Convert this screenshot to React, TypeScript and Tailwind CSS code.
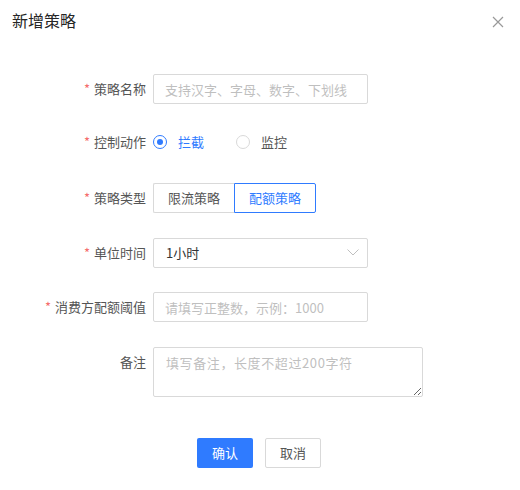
import React, { useState } from 'react';

const FONT = { fontFamily: '"Noto Sans CJK SC", "Noto Sans", sans-serif' };

const Label: React.FC<{ text: string; required?: boolean }> = ({ text, required }) => (
  <div className="w-[153px] shrink-0 pr-[7px] h-[30px] flex items-center justify-end text-[13px] text-[#555]">
    {required && <span className="text-[#f56c6c] mr-[4px] text-[13px]">*</span>}
    {text}
  </div>
);

const Radio: React.FC<{ checked: boolean; label: string; onClick: () => void }> = ({ checked, label, onClick }) => (
  <button type="button" onClick={onClick} className="flex items-center h-[30px] cursor-pointer">
    <span
      className={`w-[14px] h-[14px] rounded-full border flex items-center justify-center ${
        checked ? 'border-[#2f7bff]' : 'border-[#d9d9d9]'
      }`}
    >
      {checked && <span className="w-[6px] h-[6px] rounded-full bg-[#2f7bff]" />}
    </span>
    <span className={`ml-[11px] text-[13px] ${checked ? 'text-[#2f7bff]' : 'text-[#555]'}`}>{label}</span>
  </button>
);

export default function App() {
  const [action, setAction] = useState('block');
  const [type, setType] = useState('quota');

  return (
    <div className="w-[520px] h-[490px] bg-white relative" style={FONT}>
      <div className="flex items-center justify-between pl-[12px] pr-[16px] pt-[5px] h-[35px]">
        <h2 className="text-[16px] text-[#262626] font-normal">新增策略</h2>
        <button type="button" className="text-[#999] mt-[4px]">
          <svg width="12" height="12" viewBox="0 0 12 12" fill="none" stroke="currentColor" strokeWidth="1.2">
            <path d="M1 1L11 11M11 1L1 11" />
          </svg>
        </button>
      </div>

      <form className="mt-[39px]">
        <div className="flex mb-[23px]">
          <Label text="策略名称" required />
          <input
            className="w-[215px] h-[30px] border border-[#d9d9d9] rounded-[2px] px-[11px] text-[13px] text-[#333] placeholder:text-[#bfbfbf] outline-none"
            placeholder="支持汉字、字母、数字、下划线"
          />
        </div>

        <div className="flex mb-[26px]">
          <Label text="控制动作" required />
          <div className="flex items-center">
            <Radio checked={action === 'block'} label="拦截" onClick={() => setAction('block')} />
            <div className="ml-[32px]">
              <Radio checked={action === 'monitor'} label="监控" onClick={() => setAction('monitor')} />
            </div>
          </div>
        </div>

        <div className="flex mb-[24.6px]">
          <Label text="策略类型" required />
          <div className="flex h-[30px] text-[13px]">
            <button
              type="button"
              onClick={() => setType('limit')}
              className={`w-[81px] border rounded-l-[2px] ${
                type === 'limit' ? 'border-[#2f7bff] text-[#2f7bff]' : 'border-[#d9d9d9] border-r-0 text-[#555]'
              }`}
            >
              限流策略
            </button>
            <button
              type="button"
              onClick={() => setType('quota')}
              className={`w-[82px] border rounded-r-[2px] ${
                type === 'quota' ? 'border-[#2f7bff] text-[#2f7bff]' : 'border-[#d9d9d9] text-[#555]'
              }`}
            >
              配额策略
            </button>
          </div>
        </div>

        <div className="flex mb-[24.6px]">
          <Label text="单位时间" required />
          <div className="w-[215px] h-[30px] border border-[#d9d9d9] rounded-[2px] pl-[12px] pr-[8px] flex items-center justify-between text-[13px] text-[#333]">
            <span>1小时</span>
            <svg width="12" height="7" viewBox="0 0 12 7" fill="none" stroke="#bfbfbf" strokeWidth="1">
              <path d="M0.5 0.5L6 6L11.5 0.5" />
            </svg>
          </div>
        </div>

        <div className="flex mb-[24.6px]">
          <Label text="消费方配额阈值" required />
          <input
            className="w-[215px] h-[30px] border border-[#d9d9d9] rounded-[2px] px-[11px] text-[13px] text-[#333] placeholder:text-[#bfbfbf] outline-none"
            placeholder="请填写正整数，示例：1000"
          />
        </div>

        <div className="flex">
          <Label text="备注" />
          <textarea
            className="w-[270px] h-[50px] border border-[#d9d9d9] rounded-[2px] px-[12px] py-[5px] text-[13px] leading-[20px] tracking-[0.6px] text-[#333] placeholder:text-[#bfbfbf] outline-none"
            placeholder="填写备注，长度不超过200字符"
          />
        </div>

        <div className="flex justify-center gap-[12px] mt-[41px] pr-[2px]">
          <button type="button" className="w-[56px] h-[30px] rounded-[2px] bg-[#2f7bff] text-white text-[13px]">
            确认
          </button>
          <button
            type="button"
            className="w-[56px] h-[30px] rounded-[2px] border border-[#d9d9d9] bg-white text-[#555] text-[13px]"
          >
            取消
          </button>
        </div>
      </form>
    </div>
  );
}
